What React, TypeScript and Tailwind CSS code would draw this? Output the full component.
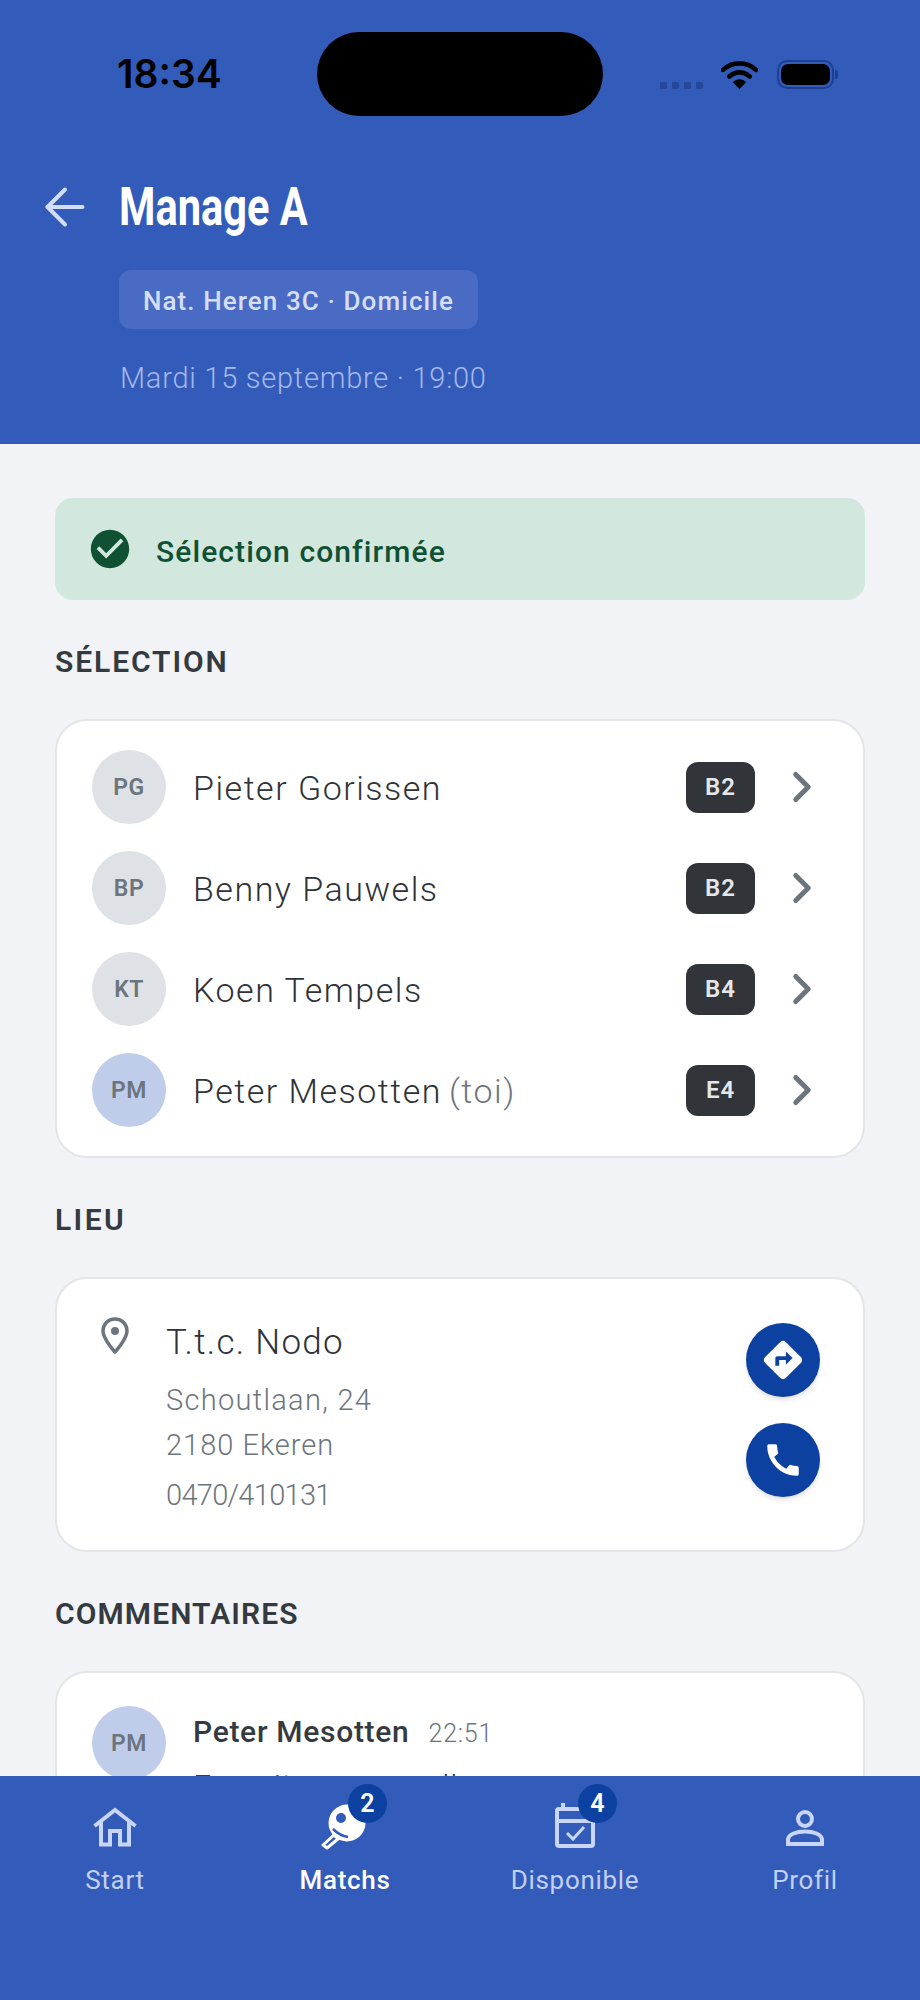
import React from 'react';
import { ArrowLeft, ChevronRight } from 'lucide-react';
import { MdCall, MdCheckCircle, MdDirections } from 'react-icons/md';

const PLAYERS = [
  { initials: 'PG', name: 'Pieter Gorissen', rank: 'B2' },
  { initials: 'BP', name: 'Benny Pauwels', rank: 'B2' },
  { initials: 'KT', name: 'Koen Tempels', rank: 'B4' },
  { initials: 'PM', name: 'Peter Mesotten', rank: 'E4', self: true },
];

const StatusBar = () => (
  <div className="flex items-start pt-[32px] pl-[117px] h-[116px]">
    <div className="w-[200px] pt-[21px] font-['Inter'] text-[39px] leading-[42px] font-semibold text-black tracking-[0px]">
      18:34
    </div>
    <div className="w-[286px] h-[84px] rounded-[42px] bg-black" />
    <div className="flex items-center ml-[57px] mt-[28px]">
      <div className="flex gap-[5px] mt-[22px]">
        {[0, 1, 2, 3].map(i => (
          <div key={i} className="w-[7px] h-[7px] rounded-[1px] bg-[#25479c]" />
        ))}
      </div>
      <svg className="ml-[18px]" width="37" height="29" viewBox="0 0 36 28">
        <path d="M2 9.500C11 1 25 1 34 9.500" fill="none" stroke="#000" strokeWidth="4.500" strokeLinecap="round" />
        <path d="M8 16C14 10.500 22 10.500 28 16" fill="none" stroke="#000" strokeWidth="4.500" strokeLinecap="round" />
        <path d="M11.500 21.500C15 17.500 21 17.500 24.500 21.500L18 28Z" fill="#000" />
      </svg>
      <div className="flex items-center ml-[19px]">
        <div className="w-[57px] h-[29px] rounded-[10px] border-2 border-[#1e3f8f] p-[2px]">
          <div className="w-full h-full rounded-[7px] bg-black" />
        </div>
        <div className="w-[3px] h-[9px] ml-[1px] rounded-r-[2px] bg-[#1e3f8f]" />
      </div>
    </div>
  </div>
);

const SectionTitle = ({ children, tracking }: { children: React.ReactNode; tracking: string }) => (
  <h2 className={'mt-[46px] mb-[41px] h-[32px] text-[30px] leading-[32px] font-semibold text-[#343a40] ' + tracking}>
    {children}
  </h2>
);

const Avatar = ({ initials, self }: { initials: string; self?: boolean }) => (
  <div
    className={
      'shrink-0 w-[74px] h-[74px] pt-[2px] rounded-full flex items-center justify-center text-[23px] font-semibold tracking-[0.5px] text-[#6c757d] ' +
      (self ? 'bg-[#bfcdeb]' : 'bg-[#dee2e6]')
    }
  >
    {initials}
  </div>
);

const HomeIcon = () => (
  <svg className="mb-[1px]" width="44" height="40" viewBox="0 0 44 40" fill="none" stroke="#c9d6f9" strokeWidth="4">
    <path d="M1.500 19L22 3L42.500 19" />
    <path d="M8 14V37.500H17V24H27V37.500H36V14" />
  </svg>
);

const PaddleIcon = () => (
  <svg className="mb-[-2px]" width="48" height="50" viewBox="0 0 48 50">
    <circle cx="26" cy="23" r="18.500" fill="#fff" />
    <circle cx="20" cy="18" r="5" fill="#335bb9" />
    <path d="M12 29C16 33 21 36 27 37" fill="none" stroke="#335bb9" strokeWidth="2.500" />
    <path d="M13 35L17 39L6 48L2 45Z" fill="#335bb9" stroke="#fff" strokeWidth="3" strokeLinejoin="round" />
  </svg>
);

const CalendarIcon = () => (
  <svg className="mb-[-1px]" width="44" height="48" viewBox="0 0 44 48" fill="none" stroke="#c9d6f9" strokeWidth="4">
    <path d="M10 2V9" />
    <rect x="4" y="8" width="36" height="37" rx="2" />
    <path d="M4 20H40" />
    <path d="M14 32L20 38L31 26" strokeWidth="3" />
  </svg>
);

const ProfileIcon = () => (
  <svg className="mb-[2px]" width="40" height="36" viewBox="0 0 40 36" fill="none" stroke="#c9d6f9" strokeWidth="4">
    <circle cx="20" cy="9" r="7" />
    <path d="M3 34H37V30C37 24 28 21.500 20 21.500C12 21.500 3 24 3 30Z" />
  </svg>
);

const NavItem = ({
  icon,
  label,
  badge,
  active,
}: {
  icon: React.ReactNode;
  label: string;
  badge?: number;
  active?: boolean;
}) => (
  <div className="flex-1 flex flex-col items-center pt-[24px]">
    <div className="relative w-[60px] h-[48px] flex items-end justify-center">
      {icon}
      {badge !== undefined && (
        <div className="absolute left-[33px] top-[-16px] w-[39px] h-[39px] rounded-full bg-[#0d41a1] text-white text-[25px] font-semibold flex items-center justify-center">
          {badge}
        </div>
      )}
    </div>
    <div
      className={
        'mt-[16px] text-[26px] leading-[32px] tracking-[0.7px] ' +
        (active ? 'text-white font-medium' : 'text-[#c2d0f5]')
      }
    >
      {label}
    </div>
  </div>
);

export default function App() {
  return (
    <div className="w-[920px] h-[2000px] flex flex-col overflow-hidden bg-[#f2f3f6] font-['Roboto',sans-serif]">
      {/* Header */}
      <header className="h-[444px] shrink-0 bg-[#335bb9]">
        <StatusBar />
        <div className="flex items-center mt-[61px] pl-[35px]">
          <ArrowLeft size={60} strokeWidth={1.6} className="text-[#d3ddf8]" />
          <h1 className="ml-[24px] text-[54px] leading-[60px] font-bold text-white scale-x-[0.77] origin-left">
            Manage A
          </h1>
        </div>
        <div className="ml-[119px] mt-[33px] pt-[3px] w-[359px] h-[59px] rounded-[12px] bg-[#4a6bc4] flex items-center justify-center text-[26px] font-medium tracking-[1.1px] text-[#d5def8]">
          Nat. Heren 3C · Domicile
        </div>
        <div className="ml-[120px] mt-[29px] text-[29px] leading-[40px] font-light tracking-[0.75px] text-[#a4b8ec]">
          Mardi 15 septembre · 19:00
        </div>
      </header>

      {/* Content */}
      <main className="flex-1 min-h-0 overflow-hidden px-[55px] pt-[54px]">
        <div className="h-[102px] rounded-[18px] bg-[#d2e7dd] flex items-center pl-[32px] gap-[23px]">
          <MdCheckCircle size={46} className="text-[#0f5132]" />
          <span className="pt-[4px] text-[30px] font-medium tracking-[1.1px] text-[#0f5132]">Sélection confirmée</span>
        </div>

        <SectionTitle tracking="tracking-[1.9px]">SÉLECTION</SectionTitle>
        <section className="h-[439px] rounded-[32px] border-2 border-[#e3e5e8] bg-white px-[35px] pt-[29px] flex flex-col gap-[27px]">
          {PLAYERS.map(player => (
            <div key={player.initials} className="flex items-center h-[74px]">
              <Avatar initials={player.initials} self={player.self} />
              <div className="ml-[27px] pt-[3px] flex-1 text-[34px] font-light tracking-[1.5px] text-[#2f3338]">
                {player.name}
                {player.self && <span className="ml-[7px] text-[#6c757d]">(toi)</span>}
              </div>
              <div className="w-[69px] h-[51px] rounded-[12px] bg-[#313439] flex items-center justify-center text-[24px] font-semibold tracking-[1px] text-[#e4e7ea]">
                {player.rank}
              </div>
              <ChevronRight size={50} strokeWidth={2.4} className="ml-[22px] mr-[1px] text-[#6c757d]" />
            </div>
          ))}
        </section>

        <SectionTitle tracking="tracking-[2.4px]">LIEU</SectionTitle>
        <section className="h-[275px] rounded-[32px] border-2 border-[#e3e5e8] bg-white flex pl-[44px] pr-[43px]">
          <svg className="mt-[38px]" width="28" height="37" viewBox="0 0 28 37" fill="none">
            <path
              d="M14 2C7 2 2 7.500 2 14C2 22 14 35 14 35C14 35 26 22 26 14C26 7.500 21 2 14 2Z"
              stroke="#6c757d"
              strokeWidth="3.500"
              strokeLinejoin="round"
            />
            <circle cx="14" cy="14" r="4" fill="#6c757d" />
          </svg>
          <div className="ml-[37px] flex-1 font-light">
            <div className="mt-[44px] text-[35px] leading-[40px] tracking-[1.3px] text-[#2f3338]">T.t.c. Nodo</div>
            <div className="mt-[15px] text-[29px] leading-[44px] tracking-[1.3px] text-[#6c757d]">Schoutlaan, 24</div>
            <div className="mt-[1px] text-[29px] leading-[44px] tracking-[1px] text-[#6c757d]">2180 Ekeren</div>
            <div className="mt-[6px] text-[29px] leading-[44px] tracking-[-0.7px] text-[#6c757d]">0470/410131</div>
          </div>
          <div className="flex flex-col gap-[26px] pt-[44px]">
            <div className="w-[74px] h-[74px] rounded-full bg-[#0d41a1] shadow-md flex items-center justify-center">
              <MdDirections size={46} className="text-white" />
            </div>
            <div className="w-[74px] h-[74px] rounded-full bg-[#0d41a1] shadow-md flex items-center justify-center">
              <MdCall size={42} className="text-white" />
            </div>
          </div>
        </section>

        <SectionTitle tracking="tracking-[1.1px]">COMMENTAIRES</SectionTitle>
        <section className="h-[300px] rounded-[32px] border-2 border-[#e3e5e8] bg-white flex px-[35px] pt-[33px]">
          <Avatar initials="PM" self />
          <div className="ml-[27px] pt-[6px]">
            <div className="flex items-baseline gap-[19px]">
              <span className="text-[30px] leading-[40px] font-medium tracking-[0.7px] text-[#343a40]">Peter Mesotten</span>
              <span className="text-[25px] font-light tracking-[0.8px] text-[#6c757d]">22:51</span>
            </div>
            <p className="mt-[13px] text-[32px] leading-[40px] font-light tracking-[0.8px] text-[#343a40]">
              En voiture pour aller
            </p>
          </div>
        </section>
      </main>

      {/* Bottom nav */}
      <nav className="h-[224px] shrink-0 bg-[#335bb9] flex">
        <NavItem icon={<HomeIcon />} label="Start" />
        <NavItem icon={<PaddleIcon />} label="Matchs" badge={2} active />
        <NavItem icon={<CalendarIcon />} label="Disponible" badge={4} />
        <NavItem icon={<ProfileIcon />} label="Profil" />
      </nav>
    </div>
  );
}
